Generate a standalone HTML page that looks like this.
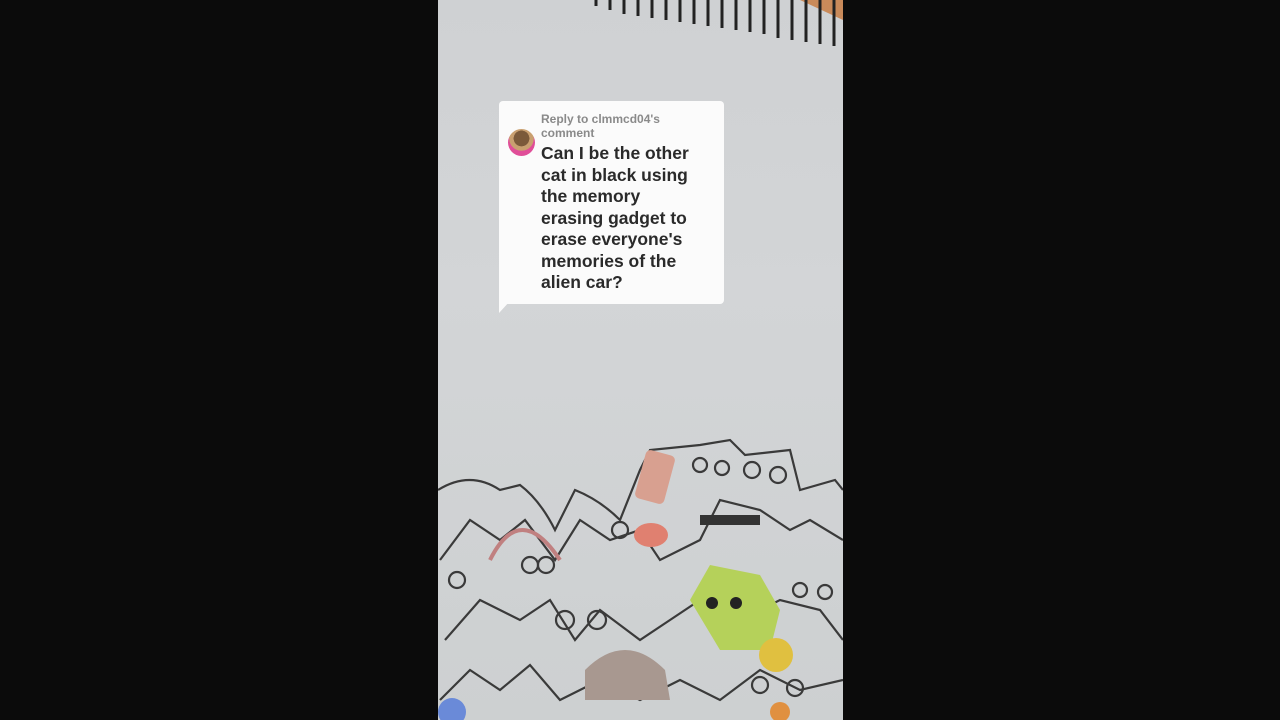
<!DOCTYPE html>
<html><head><style>
html,body{margin:0;padding:0;width:1280px;height:720px;background:#0b0b0b;overflow:hidden}
#v{position:absolute;left:438px;top:0;width:405px;height:720px;background:linear-gradient(180deg,#cfd1d3 0%,#d3d5d7 40%,#cdd0d1 100%);overflow:hidden}
#card{position:absolute;left:499px;top:101px;width:225px;height:203px;background:#fbfbfb;border-radius:4px}
#tail{position:absolute;left:499px;top:300px;width:0;height:0;border-left:12px solid #fbfbfb;border-bottom:13px solid transparent}
.av{position:absolute;left:508px;top:129px;width:27px;height:27px;border-radius:50%;background:radial-gradient(circle at 50% 35%,#7b5a3a 0 35%,#c9a070 36% 55%,#e04e98 56%)}
.sm{position:absolute;left:541px;top:112px;font:bold 12px/14px "Liberation Sans",sans-serif;color:#8a8a8a;white-space:nowrap}
.big{position:absolute;left:541px;top:143px;font:bold 17.5px/21.5px "Liberation Sans",sans-serif;color:#2a2a2a;white-space:nowrap}
</style></head><body>
<div id="v">
<svg width="405" height="720" viewBox="438 0 405 720" style="position:absolute;left:0;top:0">
<polygon points="800,0 843,0 843,20" fill="#c98a5a"/>
<g stroke="#222" stroke-width="3" fill="none">
<path d="M596 0v6M610 0v10M624 0v14M638 0v16M652 0v18M666 0v20M680 0v22M694 0v24M708 0v26M722 0v28M736 0v30M750 0v32M764 0v34M778 0v38M792 0v40M806 0v42M820 0v44M834 0v46"/>
</g>
<g stroke="#3a3a3a" stroke-width="2.2" fill="none">
<path d="M438 490 Q470 470 500 490 L520 485 Q540 500 555 530 L575 490 Q600 500 620 520 L640 470 L650 450 L700 445 L730 440 L745 455 L790 450 L800 490 L835 480 L843 490"/>
<path d="M440 560 L470 520 L500 540 L525 520 L555 560 L580 520 L610 540 L640 530 L660 560 L700 540 L720 500 L760 510 L790 530 L810 520 L843 540"/>
<path d="M445 640 L480 600 L520 620 L550 600 L575 640 L600 610 L640 640 L670 620 L700 600 L740 620 L780 600 L820 610 L843 640"/>
<path d="M440 700 L470 670 L500 690 L530 665 L560 700 L600 680 L640 700 L680 680 L720 700 L760 670 L800 690 L843 680"/>
<circle cx="565" cy="620" r="9"/><circle cx="597" cy="620" r="9"/>
<circle cx="752" cy="470" r="8"/><circle cx="778" cy="475" r="8"/>
<circle cx="700" cy="465" r="7"/><circle cx="722" cy="468" r="7"/>
<circle cx="620" cy="530" r="8"/><circle cx="530" cy="565" r="8"/><circle cx="546" cy="565" r="8"/>
<circle cx="457" cy="580" r="8"/><circle cx="800" cy="590" r="7"/><circle cx="825" cy="592" r="7"/>
<circle cx="760" cy="685" r="8"/><circle cx="795" cy="688" r="8"/>
<path d="M490 560 Q520 500 560 560" stroke="#c08080" stroke-width="4"/>
</g>
<rect x="640" y="452" width="30" height="50" rx="5" fill="#d8a090" transform="rotate(15 655 477)"/>
<ellipse cx="651" cy="535" rx="17" ry="12" fill="#e08070"/>
<path d="M690 600 L710 565 L760 575 L780 610 L770 650 L720 650 Z" fill="#b5d15a"/>
<circle cx="712" cy="603" r="6" fill="#222"/><circle cx="736" cy="603" r="6" fill="#222"/>
<circle cx="776" cy="655" r="17" fill="#e0c040"/>
<path d="M585 670 Q625 630 665 670 L670 700 L585 700 Z" fill="#a89890"/>
<rect x="700" y="515" width="60" height="10" fill="#333"/>
<circle cx="452" cy="712" r="14" fill="#6a8ad8"/>
<circle cx="780" cy="712" r="10" fill="#e09040"/>
</svg>
</div>
<div id="card"></div><div id="tail"></div>
<div class="av"></div>
<div class="sm">Reply to clmmcd04's<br>comment</div>
<div class="big">Can I be the other<br>cat in black using<br>the memory<br>erasing gadget to<br>erase everyone's<br>memories of the<br>alien car?</div>
</body></html>
